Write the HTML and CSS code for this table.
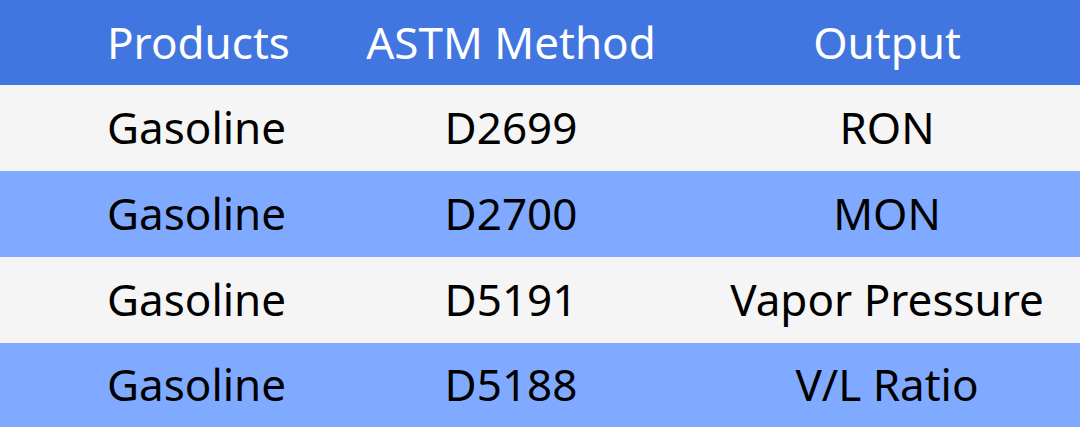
FILE: index.html
```html
<!DOCTYPE html>
<html>
<head>
<meta charset="utf-8">
<link rel="stylesheet" href="styles.css">
</head>
<body>
<div class="table">
  <div class="row head">
    <div class="cell c1">Products</div>
    <div class="cell c2">ASTM Method</div>
    <div class="cell c3">Output</div>
  </div>
  <div class="row gray">
    <div class="cell c1">Gasoline</div>
    <div class="cell c2">D2699</div>
    <div class="cell c3">RON</div>
  </div>
  <div class="row blue">
    <div class="cell c1">Gasoline</div>
    <div class="cell c2">D2700</div>
    <div class="cell c3">MON</div>
  </div>
  <div class="row gray">
    <div class="cell c1">Gasoline</div>
    <div class="cell c2">D5191</div>
    <div class="cell c3">Vapor Pressure</div>
  </div>
  <div class="row blue last">
    <div class="cell c1">Gasoline</div>
    <div class="cell c2">D5188</div>
    <div class="cell c3">V/L Ratio</div>
  </div>
</div>
</body>
</html>
```
FILE: styles.css
```css
html, body {
  margin: 0;
  padding: 0;
  background: #ffffff;
}
.table {
  width: 1080px;
  height: 427px;
  display: flex;
  flex-direction: column;
  font-family: "Noto Sans", sans-serif;
  font-size: 44px;
  color: #000000;
}
.row {
  display: grid;
  grid-template-columns: 322px 378px 374px;
  align-items: center;
  height: 86px;
}
.row.head {
  height: 85px;
  background: #4176e1;
  color: #ffffff;
}
.row.last {
  height: 84px;
}
.row.gray {
  background: #f5f5f5;
}
.row.blue {
  background: #80aaff;
}
.cell {
  white-space: nowrap;
  line-height: 1;
  padding-bottom: 2px;
}
.c1 {
  padding-left: 107px;
}
.c2, .c3 {
  text-align: center;
}
```
